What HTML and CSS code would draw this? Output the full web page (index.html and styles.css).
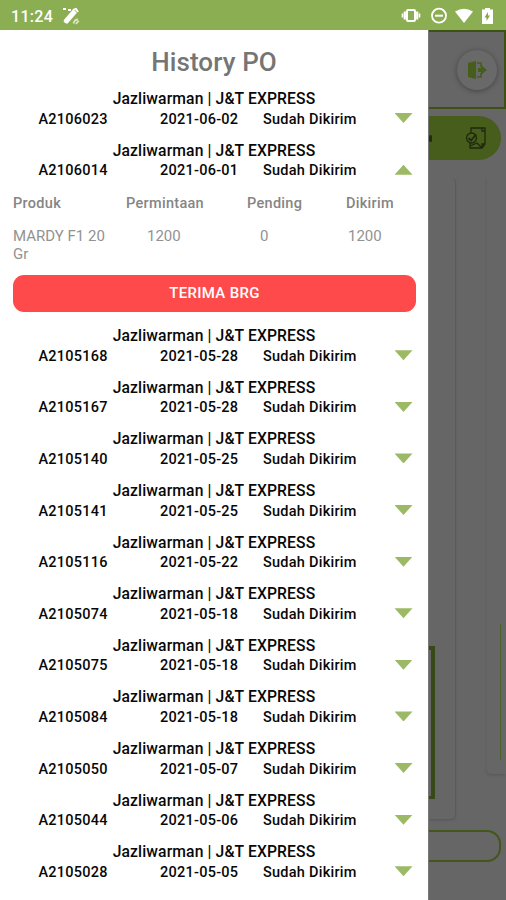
FILE: index.html
```
<!DOCTYPE html>
<html lang="id">
<head>
<meta charset="utf-8">
<title>History PO</title>
<link rel="stylesheet" href="styles.css">
</head>
<body>
<header class="status">
  <span class="clock">11:24</span>
  <svg class="satellite" width="18" height="18" viewBox="0 0 18 18"><path d="M3.500 15 13 4" stroke="#fff" stroke-width="5"/><path d="M1 2h3M6 3h3M11 3l3-1 2 3M2 14l3 2" stroke="#fff" stroke-width="2" fill="none"/><path d="M11.500 16.500q1-4 4.500-4M14 17q1-2 3-3" stroke="#dce8c4" stroke-width="1.800" fill="none"/></svg>
  <svg class="system" width="96" height="20" viewBox="0 0 96 20"><g fill="none" stroke="#fff"><rect x="7" y="4" width="8" height="11" rx="1" stroke-width="2"/><path d="M4.800 5.500v8M17.200 5.500v8" stroke-width="2.200"/><path d="M2.500 7.500v4M19.500 7.500v4" stroke-width="1.600"/><circle cx="39" cy="9.700" r="7" stroke-width="1.800"/><path d="M35 9.700h8" stroke-width="2"/></g><path d="M55 5.500Q64 0 73 5.500L64 17Z" fill="#fff"/><path d="M82 3.500h3V2h5v1.500h3V18H82Z" fill="#fff"/><path d="m88 6-3.500 5.500h2V15l3.500-5.500h-2Z" fill="#83a844"/></svg>
</header>
<div class="screen">
<main class="drawer">
  <h1>History PO</h1>
  <section class="order"><div class="name">Jazliwarman | J&amp;T EXPRESS</div><div class="line"><span>A2106023</span><span>2021-06-02</span><span>Sudah Dikirim</span><i class="arrow"></i></div></section>
  <section class="order"><div class="name">Jazliwarman | J&amp;T EXPRESS</div><div class="line"><span>A2106014</span><span>2021-06-01</span><span>Sudah Dikirim</span><i class="arrow up"></i></div></section>
  <section class="detail">
    <div class="cols head"><span>Produk</span><span>Permintaan</span><span>Pending</span><span>Dikirim</span></div>
    <div class="cols item"><span>MARDY F1 20<br>Gr</span><span>1200</span><span>0</span><span>1200</span></div>
    <button class="receive">TERIMA BRG</button>
  </section>
  <section class="order"><div class="name">Jazliwarman | J&amp;T EXPRESS</div><div class="line"><span>A2105168</span><span>2021-05-28</span><span>Sudah Dikirim</span><i class="arrow"></i></div></section>
  <section class="order"><div class="name">Jazliwarman | J&amp;T EXPRESS</div><div class="line"><span>A2105167</span><span>2021-05-28</span><span>Sudah Dikirim</span><i class="arrow"></i></div></section>
  <section class="order"><div class="name">Jazliwarman | J&amp;T EXPRESS</div><div class="line"><span>A2105140</span><span>2021-05-25</span><span>Sudah Dikirim</span><i class="arrow"></i></div></section>
  <section class="order"><div class="name">Jazliwarman | J&amp;T EXPRESS</div><div class="line"><span>A2105141</span><span>2021-05-25</span><span>Sudah Dikirim</span><i class="arrow"></i></div></section>
  <section class="order"><div class="name">Jazliwarman | J&amp;T EXPRESS</div><div class="line"><span>A2105116</span><span>2021-05-22</span><span>Sudah Dikirim</span><i class="arrow"></i></div></section>
  <section class="order"><div class="name">Jazliwarman | J&amp;T EXPRESS</div><div class="line"><span>A2105074</span><span>2021-05-18</span><span>Sudah Dikirim</span><i class="arrow"></i></div></section>
  <section class="order"><div class="name">Jazliwarman | J&amp;T EXPRESS</div><div class="line"><span>A2105075</span><span>2021-05-18</span><span>Sudah Dikirim</span><i class="arrow"></i></div></section>
  <section class="order"><div class="name">Jazliwarman | J&amp;T EXPRESS</div><div class="line"><span>A2105084</span><span>2021-05-18</span><span>Sudah Dikirim</span><i class="arrow"></i></div></section>
  <section class="order"><div class="name">Jazliwarman | J&amp;T EXPRESS</div><div class="line"><span>A2105050</span><span>2021-05-07</span><span>Sudah Dikirim</span><i class="arrow"></i></div></section>
  <section class="order"><div class="name">Jazliwarman | J&amp;T EXPRESS</div><div class="line"><span>A2105044</span><span>2021-05-06</span><span>Sudah Dikirim</span><i class="arrow"></i></div></section>
  <section class="order"><div class="name">Jazliwarman | J&amp;T EXPRESS</div><div class="line"><span>A2105028</span><span>2021-05-05</span><span>Sudah Dikirim</span><i class="arrow"></i></div></section>
</main>
<aside class="behind">
  <div class="topbar"><div class="logout"><svg width="20" height="20" viewBox="0 0 20 20"><path d="M1 3 9 1v18l-8-2Z" fill="#465d1c"/><path d="M10 3h4v4M14 13v4h-4" fill="none" stroke="#465d1c" stroke-width="1.600"/><path d="M11 8h3V5l6 5-6 5v-3h-3Z" fill="#465d1c"/></svg></div></div>
  <div class="pill"><i class="speck"></i><svg width="22" height="24" viewBox="0 0 22 24" fill="none" stroke="#1f290e" stroke-width="1.300"><path d="M6 7V2h14v16l-3 4H5v-5M17 2v3h3M17 22v-4h3M5 20l7-3 5 5"/><circle cx="6.500" cy="12" r="5"/><path d="m3.500 12 2.500 2.500 5-6" stroke-width="1.800"/></svg></div>
  <div class="cards">
    <div class="card"><div class="frame"></div></div>
    <div class="card next"><div class="bar"></div></div>
  </div>
  <div class="field"></div>
</aside>
</div>
</body>
</html>
```
FILE: styles.css
```
* { box-sizing: border-box; }
body { margin: 0; width: 506px; height: 900px; overflow: hidden; font-family: Roboto, sans-serif; background: #fff; }
.status { height: 30px; background: #8cae52; display: flex; align-items: center; padding: 2px 10px 0 11px; color: #fff; }
.clock { font-size: 16px; font-weight: 500; letter-spacing: .3px; width: 51px; }
.system { margin-left: auto; }
.screen { display: flex; height: 870px; }
.drawer { width: 428px; height: 870px; overflow: hidden; background: #fff; }
h1 { margin: 0; height: 58px; padding-top: 17px; line-height: 30px; font-size: 26px; font-weight: 500; letter-spacing: .1px; color: #757575; text-align: center; }
.order { height: 51.6px; color: #080808; font-weight: 500; }
.name { height: 21.6px; line-height: 21.6px; font-size: 15.7px; letter-spacing: .12px; text-align: center; }
.line { height: 20px; line-height: 20px; font-size: 14.5px; letter-spacing: .25px; display: grid; grid-template-columns: 121.500px 103px 131.500px 19px; padding-left: 38.500px; white-space: nowrap; }
.arrow { width: 18px; height: 10px; margin-top: 3.500px; background: #9cba66; clip-path: polygon(0 0, 100% 0, 50% 100%); }
.arrow.up { clip-path: polygon(50% 0, 100% 100%, 0 100%); }
.detail { height: 134px; padding: 3px 12px 0 13px; color: #858585; }
.cols { display: grid; line-height: 18px; font-size: 14.5px; white-space: nowrap; }
.head { grid-template-columns: 113px 121px 99px 60px; height: 32px; padding-top: 1px; font-weight: 500; letter-spacing: .3px; }
.item { grid-template-columns: 134px 113px 88px 60px; height: 48.500px; padding-top: 1px; font-size: 15px; color: #929292; }
.receive { display: block; width: 403px; height: 37px; border: 0; border-radius: 11px; padding: 0; background: #fe4a4a; color: #fff; font: 500 15px Roboto, sans-serif; letter-spacing: .3px; }
.behind { width: 78px; height: 870px; background: #666; border-left: 1px solid #777; overflow: hidden; }
.topbar { height: 79px; border: solid #3d5117; border-width: 2px 2px 2px 0; padding: 18px 0 0 28px; }
.logout { width: 40px; height: 40px; border-radius: 50%; background: #696969; box-shadow: 0 1px 4px 1px #4d4d4d; display: flex; align-items: center; justify-content: center; }
.pill { width: 72px; height: 44px; margin-top: 7px; border-radius: 0 22px 22px 0; background: #465d1c; display: flex; align-items: center; justify-content: space-between; padding-right: 14px; }
.speck { width: 3px; height: 7px; border-radius: 2px; background: #222b13; }
.cards { display: flex; gap: 30px; margin-top: 18px; height: 642px; }
.card { width: 27px; height: 641px; border-right: 1px solid #5b5b5b; border-radius: 0 5px 5px 0; box-shadow: 0 2px 3px -1px #555; padding-top: 468px; }
.frame { width: 6px; height: 153px; border: solid #364916; border-width: 4px 4px 3px 0; }
.card.next { width: 20px; height: 596px; border-right: 0; border-left: 1px solid #626262; border-radius: 0 0 0 5px; padding: 446px 0 0 13px; }
.bar { width: 1px; height: 136px; background: #4d6427; }
.field { width: 72px; height: 32px; margin-top: 10px; border: 2px solid #425719; border-left: 0; border-radius: 0 14px 14px 0; }
```
